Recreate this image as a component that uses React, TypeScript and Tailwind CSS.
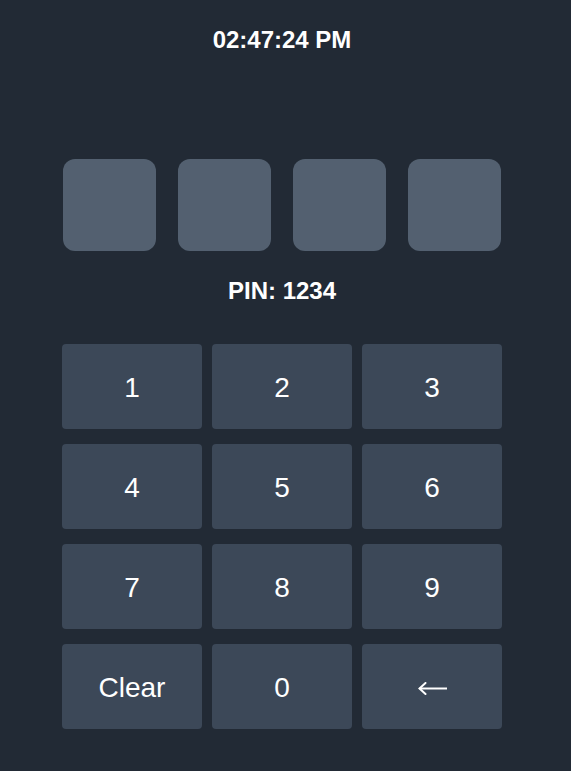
import React from "react";

const keys = ["1", "2", "3", "4", "5", "6", "7", "8", "9", "Clear", "0", "←"];

function Arrow() {
  return (
    <svg width="30" height="13" viewBox="0 0 30 13" fill="none" stroke="white" strokeWidth="2" aria-label="←">
      <path d="M1.5 6.5 H29" strokeLinecap="butt" />
      <path d="M7.5 1 L1.5 6.5 L7.5 12" strokeLinecap="round" strokeLinejoin="miter" />
    </svg>
  );
}

export default function App() {
  return (
    <div
      className="w-[571px] h-[771px] bg-[#222a35] text-white overflow-hidden"
      style={{ fontFamily: '"Liberation Sans", Arial, sans-serif' }}
    >
      <div className="w-[564px] flex flex-col items-center pt-6">
        <div className="text-[24px] leading-[32px] font-bold">02:47:24 PM</div>
        <div className="mt-[103px] flex gap-[22px]">
          {[0, 1, 2, 3].map((i) => (
            <div key={i} className="w-[93px] h-[92px] rounded-xl bg-[#536070]" />
          ))}
        </div>
        <div className="mt-[24px] text-[24px] leading-[32px] font-bold">PIN: 1234</div>
        <div className="mt-[37px] grid grid-cols-[140px_140px_140px] gap-x-[10px] gap-y-[15px]">
          {keys.map((k) => (
            <button
              key={k}
              className="h-[85px] rounded bg-[#3c4858] text-[28px] text-white flex items-center justify-center pt-[2px]"
            >
              {k === "←" ? <span className="flex mt-[1px] ml-[1px]"><Arrow /></span> : k}
            </button>
          ))}
        </div>
      </div>
    </div>
  );
}
